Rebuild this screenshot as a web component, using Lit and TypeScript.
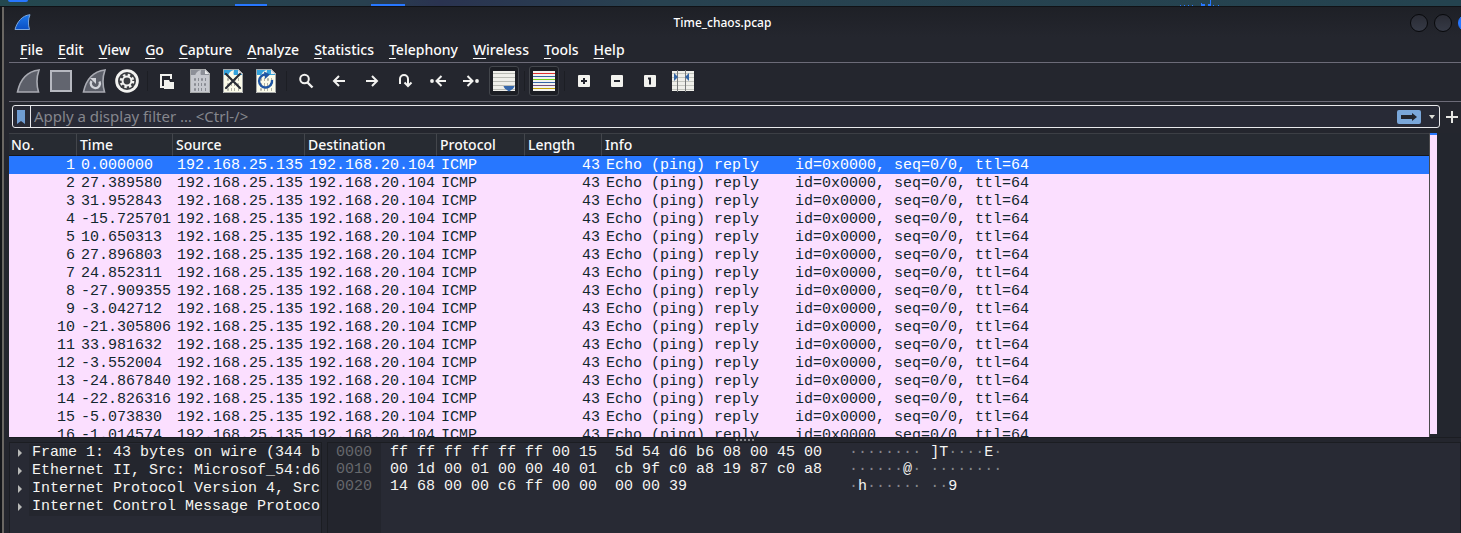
import { LitElement, html, css, svg, nothing, TemplateResult } from "lit";
import { customElement } from "lit/decorators.js";
import { classMap } from "lit/directives/class-map.js";

const TIMES = [
  "0.000000", "27.389580", "31.952843", "-15.725701", "10.650313", "27.896803",
  "24.852311", "-27.909355", "-3.042712", "-21.305806", "33.981632", "-3.552004",
  "-24.867840", "-22.826316", "-5.073830", "-1.014574",
];

const MENUS = [
  "File", "Edit", "View", "Go", "Capture", "Analyze",
  "Statistics", "Telephony", "Wireless", "Tools", "Help",
];

const TREE = [
  "Frame 1: 43 bytes on wire (344 b",
  "Ethernet II, Src: Microsof_54:d6",
  "Internet Protocol Version 4, Src",
  "Internet Control Message Protoco",
];

const BYTES = [
  { offset: "0000", hex: "ff ff ff ff ff ff 00 15  5d 54 d6 b6 08 00 45 00", text: "········ ]T····E·" },
  { offset: "0010", hex: "00 1d 00 01 00 00 40 01  cb 9f c0 a8 19 87 c0 a8", text: "······@· ········" },
  { offset: "0020", hex: "14 68 00 00 c6 ff 00 00  00 00 39", text: "·h······ ··9" },
];

const fin = svg`<path d="M1.5 23 C4 11 11 2.5 23 1 C20.5 8 20.5 16 22.5 23 Z" fill="#5c5f69" stroke="#a9abb3" stroke-width="1.6"/>`;

const digits = (color: string) => svg`
  <g fill="none" stroke=${color} stroke-width="1" opacity="0.75">
    <path d="M6.5 9.5h1v2h-1z M10.5 9v3 M13.5 9.5h1v2h-1z M17.500 9v3"/>
    <path d="M6.5 14.5h1v2h-1z M10.5 14v3 M13.5 14v3 M16.500 14.5h1v2h-1z"/>
    <path d="M6.5 19.5h1v2h-1z M10.5 19v3 M13.5 19v3 M17.500 19v3"/>
  </g>`;

const sheet = (paper: string, band: string, ink: string) => svg`
  <path d="M2 0h15l5 5v19h-20z" fill=${paper}/>
  <path d="M2 0h15l1 5h3v1h-19z" fill=${band}/>
  <path d="M7 7q1-5 6-6q-1 3 0 6z" fill=${paper}/>
  <path d="M17 0l5 5h-5z" fill="#e9eaec"/>
  <path d="M2.5 .5h14.5l4.5 4.5v18.5h-19z" fill="none" stroke="#a7a9aa" stroke-width="1"/>
  ${digits(ink)}`;

const ICONS: Record<string, TemplateResult> = {
  start: fin,
  stop: svg`<rect x="2" y="2" width="20" height="20" fill="#62656f" stroke="#b6b8c0" stroke-width="2"/>`,
  restart: svg`${fin}
    <path d="M9.5 12a4.6 4.6 0 1 0 8 .5" fill="none" stroke="#d2d4da" stroke-width="2.4"/>
    <path d="M8 9h6v6z" fill="#d2d4da"/>`,
  options: svg`<circle cx="12" cy="12" r="11.8" fill="#f3f3f1"/>
    <circle cx="12" cy="12" r="9" fill="#3a3c40"/>
    <circle cx="12" cy="12" r="6" fill="none" stroke="#f3f3f1" stroke-width="2.6" stroke-dasharray="2.4 2.312"/>
    <circle cx="12" cy="12" r="4.4" fill="none" stroke="#f3f3f1" stroke-width="2"/>`,
  open: svg`<path d="M10 18H6V6h10v4" fill="none" stroke="#f2f2ee" stroke-width="2"/>
    <path d="M9 11h5l1 2h4v7h-10z" fill="#f2f2ee"/>`,
  save: sheet("#c6c8ce", "#8d9098", "#74777f"),
  close: svg`${sheet("#fbfbe9", "#35a3dc", "#989990")}
    <path d="M5 5l14 14M19 5l-14 14" stroke="#292d35" stroke-width="2.2" stroke-linecap="round"/>`,
  reload: svg`${sheet("#fbfbe9", "#35a3dc", "#989990")}
    <path d="M12 5.5a6.5 6.5 0 1 0 6 5.5" fill="none" stroke="#1f56a3" stroke-width="2.4"/>
    <path d="M10 2.5l6 3-5 4.5z" fill="#1f56a3"/>`,
  find: svg`<circle cx="10.5" cy="10" r="4.3" fill="none" stroke="#f2f2f0" stroke-width="2"/>
    <path d="M13.5 13.5l5 5" stroke="#f2f2f0" stroke-width="2.4"/>`,
  back: svg`<path d="M18 12h-11M12 7l-5 5 5 5" fill="none" stroke="#f2f2f0" stroke-width="2"/>`,
  forward: svg`<path d="M6 12h11M12 7l5 5-5 5" fill="none" stroke="#f2f2f0" stroke-width="2"/>`,
  goto: svg`<path d="M7 15v-5a4 4 0 0 1 8 0v6M11.5 13.5l3.5 3.5 3.5-3.5" fill="none" stroke="#f2f2f0" stroke-width="2"/>`,
  first: svg`<path d="M20 12h-9M15.5 7l-5 5 5 5" fill="none" stroke="#f2f2f0" stroke-width="2"/>
    <circle cx="6" cy="12" r="1.9" fill="#f2f2f0"/>`,
  last: svg`<path d="M4 12h9M8.5 7l5 5-5 5" fill="none" stroke="#f2f2f0" stroke-width="2"/>
    <circle cx="18" cy="12" r="1.9" fill="#f2f2f0"/>`,
  autoscroll: svg`<path d="M1 2h22v20h-22z" fill="#efefea"/>
    <path d="M1 4.5h22M1 8.5h22M1 12.5h22M1 16.5h22M1 20.5h22" stroke="#b9bbb4" stroke-width="1"/>
    <path d="M11.5 17h11q0 2-5.5 5.5q-5.5-3.5-5.5-5.5z" fill="#3668ab"/>`,
  colorize: svg`<path d="M1 2h22v20h-22z" fill="#f2f2ee"/>
    <g stroke-width="1">
      <path d="M1 4.5h22" stroke="#e03030"/><path d="M1 7.5h22" stroke="#3465a4"/>
      <path d="M1 10.5h22" stroke="#73d216"/><path d="M1 13.5h22" stroke="#3465a4"/>
      <path d="M1 16.5h22" stroke="#75507b"/><path d="M1 19.5h22" stroke="#c4a000"/>
    </g>`,
  zoomin: svg`<rect x="6" y="6" width="12" height="12" rx="1" fill="#f2f2ee"/><path d="M9 12h6M12 9v6" stroke="#23252e" stroke-width="2"/>`,
  zoomout: svg`<rect x="6" y="6" width="12" height="12" rx="1" fill="#f2f2ee"/><path d="M9 12h6" stroke="#23252e" stroke-width="2"/>`,
  zoomreset: svg`<rect x="6" y="6" width="12" height="12" rx="1" fill="#f2f2ee"/><path d="M10 9.5h2v6" fill="none" stroke="#23252e" stroke-width="2"/>`,
  resize: svg`<path d="M1 2h22v20h-22z" fill="#efefea"/>
    <path d="M1 4.5h22M1 8.5h22M1 12.5h22M1 16.5h22M1 20.5h22" stroke="#c4c6bf" stroke-width="1"/>
    <path d="M6.5 1v22M14.5 1v22" stroke="#77797a" stroke-width="1"/>
    <path d="M3 4v8l4-4zM18 4v8l-4-4z" fill="#3465a4"/>`,
};

interface Tool { icon: string; label: string; checked?: boolean; }

const TOOLS: (Tool | null)[] = [
  { icon: "start", label: "Start capture" },
  { icon: "stop", label: "Stop capture" },
  { icon: "restart", label: "Restart capture" },
  { icon: "options", label: "Capture options" },
  null,
  { icon: "open", label: "Open file" },
  { icon: "save", label: "Save file" },
  { icon: "close", label: "Close file" },
  { icon: "reload", label: "Reload file" },
  null,
  { icon: "find", label: "Find packet" },
  { icon: "back", label: "Previous packet" },
  { icon: "forward", label: "Next packet" },
  { icon: "goto", label: "Go to packet" },
  { icon: "first", label: "First packet" },
  { icon: "last", label: "Last packet" },
  { icon: "autoscroll", label: "Auto scroll", checked: true },
  null,
  { icon: "colorize", label: "Colorize packets", checked: true },
  null,
  { icon: "zoomin", label: "Zoom in" },
  { icon: "zoomout", label: "Zoom out" },
  { icon: "zoomreset", label: "Normal size" },
  { icon: "resize", label: "Resize columns" },
];

@customElement("title-bar")
class TitleBar extends LitElement {
  static styles = css`
    :host { display: grid; grid-template-columns: 1fr auto 1fr; align-items: center; height: 31px; padding-left: 5px; }
    .logo { width: 17px; height: 17px; display: block; }
    .title { margin: 0; padding-right: 30px; font-size: 12px; line-height: 16px; font-weight: 500; color: #fff; }
    .buttons { display: flex; gap: 6px; justify-content: flex-end; overflow: hidden; margin-right: -15px; }
    .dot { flex: none; width: 18px; height: 18px; padding: 0; box-sizing: border-box; border: 1px solid #08090c; border-radius: 50%; background: linear-gradient(#2a2c35, #363a46); }
    .exit { background: #2777ff; border-color: #2777ff; }
  `;
  render() {
    return html`
      <svg class="logo" viewBox="0 0 17 17" aria-hidden="true">
        <defs><linearGradient id="g" x2="0" y2="1"><stop stop-color="#1d78ea"/><stop offset="1" stop-color="#0a4fc4"/></linearGradient></defs>
        <path d="M1 15.5C3 8 8 1.5 16 .7C14 5 14 11 15.5 15.5z" fill="url(#g)" stroke="#7da7dc" stroke-width="1"/>
      </svg>
      <h1 class="title">Time_chaos.pcap</h1>
      <div class="buttons">
        <button class="dot" aria-label="Minimize"></button>
        <button class="dot" aria-label="Maximize"></button>
        <button class="dot exit" aria-label="Close"></button>
      </div>`;
  }
}

@customElement("tool-bar")
class ToolBar extends LitElement {
  static styles = css`
    :host { display: flex; align-items: center; gap: 3px; height: 36px; padding: 0 0 2px 4px; border-top: 1px solid #6c6b78; border-bottom: 1px solid #6c6b78; }
    .tool { flex: none; width: 30px; height: 30px; padding: 0; display: grid; place-items: center; background: none; border: 1px solid transparent; border-radius: 3px; box-sizing: border-box; }
    .checked { border-color: #43464c; background: #1c1e24; }
    .icon { width: 24px; height: 24px; display: block; }
    .sep { flex: none; width: 1px; height: 20px; margin: 0 1px 0 2px; background: #1c1e24; }
  `;
  render() {
    return TOOLS.map((t) => t
      ? html`<button class=${classMap({ tool: true, checked: !!t.checked })} aria-label=${t.label}
          aria-pressed=${t.checked ? "true" : nothing}><svg class="icon" viewBox="0 0 24 24" aria-hidden="true">${ICONS[t.icon]}</svg></button>`
      : html`<span class="sep"></span>`);
  }
}

@customElement("filter-bar")
class FilterBar extends LitElement {
  static styles = css`
    :host { display: flex; align-items: center; padding: 3px 0 5px 3px; }
    .box { flex: 1; min-width: 0; display: flex; align-items: stretch; height: 23px; box-sizing: border-box; border: 1px solid #e9e9ec; border-radius: 3px; background: #282a36; }
    button { border: 0; padding: 0; background: none; display: grid; place-items: center; flex: none; box-sizing: border-box; }
    svg { display: block; }
    .bookmark { width: 17px; padding-right: 1px; }
    .field { flex: 1; min-width: 0; border: 0; border-left: 1px solid #e9e9ec; outline: 0; background: none; color: #fff; padding: 0 0 2px 3px; font: 15px "Noto Sans", sans-serif; }
    .field::placeholder { color: #85868d; opacity: 1; }
    .apply { width: 32px; }
    .drop { width: 14px; }
    .add { width: 21px; height: 23px; padding-left: 2px; }
  `;
  render() {
    return html`
      <div class="box">
        <button class="bookmark" aria-label="Bookmarks"><svg width="8" height="14"><path d="M0 0h8v14l-4-3-4 3z" fill="#6f9dd3"/></svg></button>
        <input class="field" type="text" aria-label="Display filter" placeholder="Apply a display filter … &lt;Ctrl-/&gt;" />
        <button class="apply" aria-label="Apply filter"><svg width="24" height="14">
          <rect width="24" height="14" rx="2" fill="#7aa7da"/>
          <path d="M4 5h11v-2l5 4-5 4v-2h-11z" fill="#22252e"/></svg></button>
        <button class="drop" aria-label="Recent filters"><svg width="6" height="4"><path d="M0 0h6l-3 4z" fill="#deded8"/></svg></button>
      </div>
      <button class="add" aria-label="Add filter button"><svg width="12" height="12"><path d="M6 0v12M0 6h12" stroke="#e6e6e3" stroke-width="2"/></svg></button>`;
  }
}

@customElement("packet-list")
class PacketList extends LitElement {
  static styles = css`
    :host { display: flex; min-height: 0; overflow: hidden; background: #23262e; }
    .list { flex: 1; min-width: 0; overflow: hidden; border-right: 1px solid #4a4a4c; background: #fbdfff; }
    table { width: 100%; table-layout: fixed; border-collapse: separate; border-spacing: 0; }
    th { height: 23px; box-sizing: border-box; padding: 0 3px; text-align: left; font: 500 14px/21px "Noto Sans", sans-serif; color: #fafafa; background: #272b32; border-top: 1px solid #3c3f45; border-right: 1px solid #43464c; border-bottom: 1px solid #16181d; white-space: nowrap; }
    th:first-child { padding-left: 2px; }
    th:last-child { border-right: 0; }
    td { height: 18px; box-sizing: border-box; padding: 1px 0 0 4px; font: 15px/17px "Liberation Mono", monospace; color: #12272e; white-space: pre; }
    .num { text-align: right; padding: 1px 2px 0 0; }
    .selected td { background: #2777ff; color: #fff; }
    .no { width: 68px; } .time { width: 96px; } .addr { width: 132px; } .proto { width: 88px; } .len { width: 77px; }
    .map { width: 7px; margin-bottom: 3px; background: #fbdfff; border-top: 2px solid #2777ff; }
    .gutter { width: 24px; }
  `;
  render() {
    return html`
      <div class="list">
        <table>
          <colgroup><col class="no"><col class="time"><col class="addr"><col class="addr"><col class="proto"><col class="len"><col></colgroup>
          <thead><tr><th>No.</th><th>Time</th><th>Source</th><th>Destination</th><th>Protocol</th><th>Length</th><th>Info</th></tr></thead>
          <tbody>${TIMES.map((t, i) => html`
            <tr class=${classMap({ selected: i === 0 })}><td class="num">${i + 1}</td><td>${t}</td><td>192.168.25.135</td><td>192.168.20.104</td><td>ICMP</td><td class="num">43</td><td>Echo (ping) reply    id=0x0000, seq=0/0, ttl=64</td></tr>`)}
          </tbody>
        </table>
      </div>
      <div class="map"></div>
      <div class="gutter"></div>`;
  }
}

@customElement("packet-details")
class PacketDetails extends LitElement {
  static styles = css`
    :host { display: grid; grid-template-columns: 313px 1fr; gap: 5px; height: 91px; font: 15px/18px "Liberation Mono", monospace; color: #f5f5f2; }
    .pane { border: 1px solid #1b1d22; border-bottom: 0; box-sizing: border-box; overflow: hidden; background: #282a34; min-width: 0; }
    .tree { list-style: none; margin: 0; padding: 1px 0 0; }
    .node { display: flex; align-items: center; white-space: nowrap; }
    .arrow { flex: none; width: 19px; display: grid; place-items: center; }
    .label { flex: 1; min-width: 0; padding: 0 0 0 3px; background: #24262e; }
    .bytes { display: flex; line-height: 17px; white-space: pre; }
    .bytes > div { padding-top: 1px; }
    .bytes .offsets { padding: 1px 9px 0 8px; background: #23252d; color: #66686c; }
    .bytes .hex { padding-left: 9px; min-width: 441px; }
    .bytes .text { padding-left: 18px; }
    .off { color: #85868b; }
  `;
  render() {
    return html`
      <div class="pane">
        <ul class="tree">${TREE.map((t) => html`<li class="node">
          <span class="arrow"><svg width="4" height="8" aria-hidden="true"><path d="M0 0l4 4-4 4z" fill="#b9bab8"/></svg></span>
          <span class="label">${t}</span></li>`)}</ul>
      </div>
      <div class="pane bytes"
        ><div class="offsets">${BYTES.map((b) => html`<div>${b.offset}</div>`)}</div
        ><div class="hex">${BYTES.map((b) => html`<div>${b.hex}</div>`)}</div
        ><div class="text">${BYTES.map((b) => html`<div>${[...b.text].map((c) => c === "·" ? html`<span class="off">·</span>` : c)}</div>`)}</div
      ></div>`;
  }
}

@customElement("app-root")
class AppRoot extends LitElement {
  static styles = css`
    :host { display: flex; flex-direction: column; height: 100vh; overflow: hidden; font-family: "Noto Sans", sans-serif; background: #14161a; }
    .desktop { flex: none; display: flex; height: 6px; padding-left: 8px; border-bottom: 1px solid #101216; background: linear-gradient(90deg, #24484f, #28404f 25%, #2a3350 30%, #284250 45%, #24434f); }
    .task { height: 6px; box-sizing: border-box; border-bottom: 2px solid #2777ff; }
    .launcher { width: 20px; height: 2px; background: #2777ff; border-radius: 0 0 4px 4px; }
    .t1 { width: 32px; margin-left: 207px; }
    .t2 { width: 34px; margin-left: 104px; }
    .task, .launcher { flex: none; }
    .graph { margin-left: 775px; align-self: flex-end; }
    .window { flex: 1; min-height: 0; display: flex; flex-direction: column; margin-left: 2px; padding-left: 5px; border-left: 2px solid #6a6763; background: linear-gradient(#1e2026, #24262e 30px); }
    .menu { flex: none; display: flex; gap: 15px; height: 24px; padding-left: 11px; }
    .item { border: 0; padding: 0; background: none; color: #fcfcfc; font: 500 14px/22px "Noto Sans", sans-serif; height: 23px; }
    .key { text-decoration: underline; text-underline-offset: 3px; text-decoration-thickness: 1px; }
    packet-list { flex: 1; }
    packet-details { flex: none; }
    .split { flex: none; height: 5px; display: grid; place-items: center; border-top: 1px solid #1b1d22; box-sizing: border-box; }
    .grip { width: 18px; margin-left: 20px; border-top: 2px dotted #85868b; }
  `;
  render() {
    return html`
      <div class="desktop" aria-hidden="true">
        <div class="launcher"></div><div class="task t1"></div><div class="task t2"></div>
        <svg class="graph" width="60" height="6"><path d="M0 5h1v1h-1zM4 5h1v1h-1zM8 5h1v1h-1zM12 5h1v1h-1zM21 3h1v3h-1zM22 4h3v2h-3zM28 4h2v2h-2zM30 0h1v6h-1zM33 5h1v1h-1zM38 5h1v1h-1z" fill="#2777ff"/></svg>
      </div>
      <main class="window">
        <title-bar></title-bar>
        <nav class="menu">${MENUS.map((m) => html`<button class="item"><span class="key">${m[0]}</span>${m.slice(1)}</button>`)}</nav>
        <tool-bar></tool-bar>
        <filter-bar></filter-bar>
        <packet-list></packet-list>
        <div class="split"><div class="grip"></div></div>
        <packet-details></packet-details>
      </main>`;
  }
}
